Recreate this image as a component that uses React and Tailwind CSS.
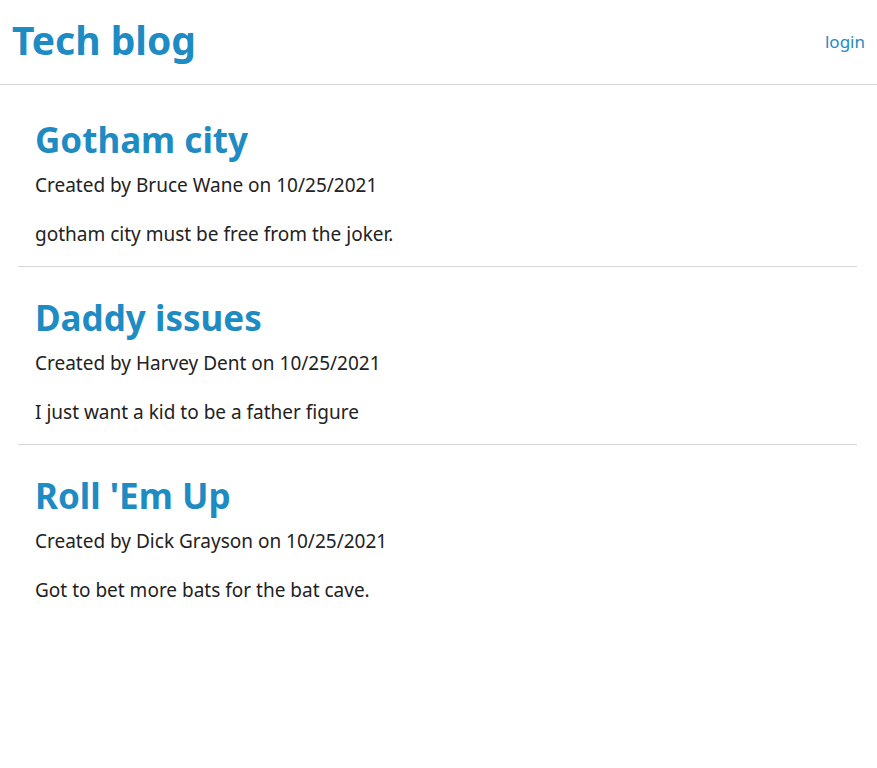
import React from 'react'

const posts = [
  {
    title: 'Gotham city',
    author: 'Bruce Wane',
    date: '10/25/2021',
    body: 'gotham city must be free from the joker.',
  },
  {
    title: 'Daddy issues',
    author: 'Harvey Dent',
    date: '10/25/2021',
    body: 'I just want a kid to be a father figure',
  },
  {
    title: "Roll 'Em Up",
    author: 'Dick Grayson',
    date: '10/25/2021',
    body: 'Got to bet more bats for the bat cave.',
  },
]

const Post = ({ post, last }) => (
  <article className={`px-[17px] pt-[30px] pb-[19px] ${last ? '' : 'border-b border-[#d6d6d6]'}`}>
    <h2 className="text-[35px] leading-[42px] font-bold text-[#1e8bc3]">{post.title}</h2>
    <p className="mt-[11px] text-[19px] leading-[26px]">
      Created by {post.author} on {post.date}
    </p>
    <p className="mt-[23px] text-[19px] leading-[26px]">{post.body}</p>
  </article>
)

export default function App() {
  return (
    <div className="min-h-screen bg-white text-[#222] font-['Noto_Sans',sans-serif]">
      <header className="h-[85px] flex justify-between items-center px-3 border-b border-[#d6d6d6]">
        <h1 className="mb-[6px] text-[39px] font-bold text-[#1e8bc3] leading-none">Tech blog</h1>
        <a href="#" className="text-[17px] text-[#1e8bc3]">
          login
        </a>
      </header>
      <main className="pl-[18px] pr-[20px] pt-[4px]">
        {posts.map((post, i) => (
          <Post key={post.title} post={post} last={i === posts.length - 1} />
        ))}
      </main>
    </div>
  )
}
